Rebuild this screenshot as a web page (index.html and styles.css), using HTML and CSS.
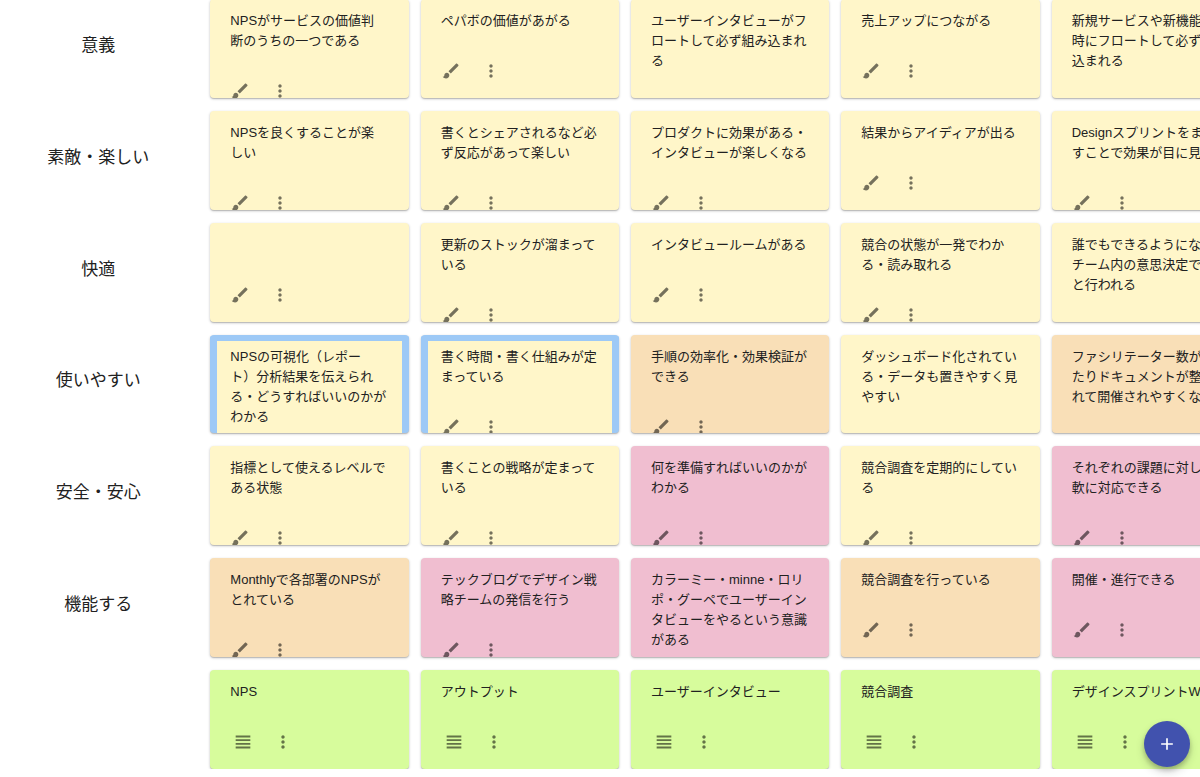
FILE: index.html
```html
<!DOCTYPE html>
<html lang="ja">
<head>
<meta charset="utf-8">
<title>ボード</title>
<link rel="stylesheet" href="styles.css">
</head>
<body>
<svg class="sprite" aria-hidden="true">
  <symbol id="brush" viewBox="0 0 24 24"><path d="M7 14c-1.66 0-3 1.34-3 3 0 1.31-1.16 2-2 2 .92 1.22 2.49 2 4 2 2.21 0 4-1.79 4-4 0-1.66-1.34-3-3-3zm13.71-9.37l-1.34-1.34c-.39-.39-1.02-.39-1.41 0L9 12.25 11.75 15l8.96-8.96c.39-.39.39-1.02 0-1.41z"/></symbol>
  <symbol id="more" viewBox="0 0 24 24"><path d="M12 8c1.1 0 2-.9 2-2s-.9-2-2-2-2 .9-2 2 .9 2 2 2zm0 2c-1.1 0-2 .9-2 2s.9 2 2 2 2-.9 2-2-.9-2-2-2zm0 6c-1.1 0-2 .9-2 2s.9 2 2 2 2-.9 2-2-.9-2-2-2z"/></symbol>
  <symbol id="lines" viewBox="0 0 24 24"><path d="M4 15h16v-2H4v2zm0 4h16v-2H4v2zm0-8h16V9H4v2zm0-6v2h16V5H4z"/></symbol>
</svg>
<main class="viewport">
  <div class="board" id="board"></div>
</main>
<button class="fab" type="button" aria-label="追加"><svg viewBox="0 0 24 24"><path d="M19 13h-6v6h-2v-6H5v-2h6V5h2v6h6v2z"/></svg></button>
<script src="board.js"></script>
</body>
</html>
```
FILE: styles.css
```css
* {
  box-sizing: border-box;
}

body {
  margin: 0;
  background: #fff;
  color: #212121;
  font-family: "Liberation Sans", "Noto Sans CJK JP", sans-serif;
}

.sprite {
  display: none;
}

.viewport {
  display: flex;
  height: calc(100vh - 8px);
  overflow: auto;
  scrollbar-width: none;
}

.board {
  flex: 1 0 0;
  display: grid;
  grid-template-columns: repeat(6, minmax(0, 1fr));
  grid-template-rows: repeat(7, minmax(98px, 1fr));
  gap: 13px 12px;
  min-width: 1250px;
  margin-top: -1px;
}

.label {
  display: flex;
  align-items: center;
  justify-content: center;
  margin: 0;
  padding: 0 2px 10px 0;
  font-size: 17px;
  font-weight: 400;
}

.card {
  overflow: hidden;
  padding: 12px 20px 0;
  border-radius: 4px;
  box-shadow: 0 1px 3px rgba(0, 0, 0, 0.2), 0 1px 1px rgba(0, 0, 0, 0.16);
}

.yellow { background: #fff6c9; }
.orange { background: #f9dfb7; }
.pink { background: #f0bed0; }
.green { background: #d7fc9c; }

.selected {
  padding: 6px 13px 0;
  border: solid #9dc9f6;
  border-width: 6px 7px 0;
}

.text {
  min-height: 20px;
  margin: 0 0 20px;
  font-size: 13px;
  line-height: 20px;
}

.actions {
  display: flex;
  margin: 0 -10px;
}

.green .actions {
  margin-left: -7px;
}

.icon-button {
  display: flex;
  align-items: center;
  justify-content: center;
  width: 40px;
  height: 40px;
  padding: 0;
  border: 0;
  background: none;
  cursor: pointer;
}

.icon {
  width: 20px;
  height: 20px;
  fill: rgba(0, 0, 0, 0.54);
}

.icon-lines {
  width: 22px;
  height: 22px;
}

.fab {
  position: fixed;
  right: 10px;
  bottom: 10px;
  display: flex;
  align-items: center;
  justify-content: center;
  width: 46px;
  height: 46px;
  padding: 0;
  border: 0;
  border-radius: 50%;
  background: #4152ae;
  box-shadow: 0 3px 5px rgba(0, 0, 0, 0.2), 0 5px 10px rgba(0, 0, 0, 0.16);
  cursor: pointer;
}

.fab svg {
  width: 20px;
  height: 20px;
  fill: #fff;
}
```
FILE: board.js
```js
const rows = [
  ["意義",
    ["yellow", "NPSがサービスの価値判<br>断のうちの一つである"],
    ["yellow", "ペパボの価値があがる"],
    ["yellow", "ユーザーインタビューがフロートして必ず組み込まれる"],
    ["yellow", "売上アップにつながる"],
    ["yellow", "新規サービスや新機能開発時にフロートして必ず組み込まれる"]],
  ["素敵・楽しい",
    ["yellow", "NPSを良くすることが楽<br>しい"],
    ["yellow", "書くとシェアされるなど必ず反応があって楽しい"],
    ["yellow", "プロダクトに効果がある・インタビューが楽しくなる"],
    ["yellow", "結果からアイディアが出る"],
    ["yellow", "Designスプリントをまわ<br>すことで効果が目に見える"]],
  ["快適",
    ["yellow", ""],
    ["yellow", "更新のストックが溜まっている"],
    ["yellow", "インタビュールームがある"],
    ["yellow", "競合の状態が一発でわかる・読み取れる"],
    ["yellow", "誰でもできるようになり、チーム内の意思決定でぱっと行われる"]],
  ["使いやすい",
    ["yellow selected", "NPSの可視化（レポー<br>ト）分析結果を伝えられ<br>る・どうすればいいのかが<br>わかる"],
    ["yellow selected", "書く時間・書く仕組みが定まっている"],
    ["orange", "手順の効率化・効果検証ができる"],
    ["yellow", "ダッシュボード化されている・データも置きやすく見やすい"],
    ["orange", "ファシリテーター数が増えたりドキュメントが整備されて開催されやすくなる"]],
  ["安全・安心",
    ["yellow", "指標として使えるレベルである状態"],
    ["yellow", "書くことの戦略が定まっている"],
    ["pink", "何を準備すればいいのかがわかる"],
    ["yellow", "競合調査を定期的にしている"],
    ["pink", "それぞれの課題に対して柔軟に対応できる"]],
  ["機能する",
    ["orange", "Monthlyで各部署のNPSがとれている"],
    ["pink", "テックブログでデザイン戦略チームの発信を行う"],
    ["pink", "カラーミー・minne・ロリポ・グーペでユーザーインタビューをやるという意識がある"],
    ["orange", "競合調査を行っている"],
    ["pink", "開催・進行できる"]],
  ["",
    ["green", "NPS"],
    ["green", "アウトプット"],
    ["green", "ユーザーインタビュー"],
    ["green", "競合調査"],
    ["green", "デザインスプリントWS"]]
];

const button = (name, label) =>
  `<button class="icon-button" type="button" aria-label="${label}"><svg class="icon icon-${name}"><use href="#${name}"/></svg></button>`;

const card = ([style, text]) => `
  <article class="card ${style}">
    <p class="text">${text}</p>
    <div class="actions">${style === "green" ? button("lines", "並べ替え") : button("brush", "色を変更")}${button("more", "メニュー")}</div>
  </article>`;

document.getElementById("board").innerHTML = rows
  .map(([label, ...cards]) => `<h2 class="label">${label}</h2>${cards.map(card).join("")}`)
  .join("");
```
